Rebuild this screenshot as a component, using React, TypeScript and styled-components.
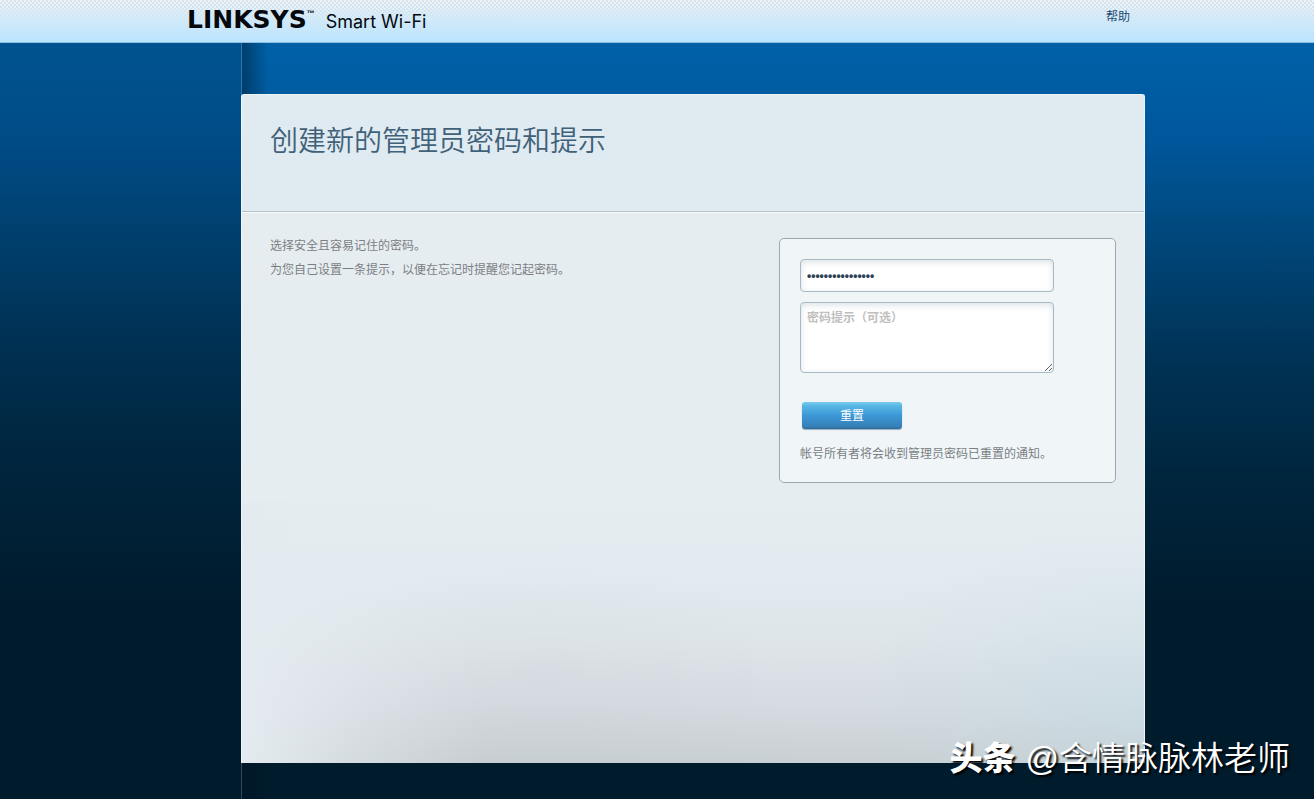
import React, { useState } from "react";
import styled, { createGlobalStyle } from "styled-components";

const GlobalStyle = createGlobalStyle`
  *, *::before, *::after { box-sizing: border-box; }
  body {
    margin: 0;
    font-family: "Liberation Sans", "Noto Sans CJK SC", sans-serif;
    font-size: 12px;
    line-height: 24px;
    color: #7b7f84;
    background: #001b2c;
  }
`;

const Page = styled.div`
  position: relative;
  display: flex;
  flex-direction: column;
  min-height: 100vh;
  overflow: hidden;
`;

const TopBar = styled.header`
  border-bottom: 1px solid #8fbfdc;
  background:
    linear-gradient(180deg, rgba(226, 238, 246, 0.4), #d0e9f9 50%, #bae4ff),
    repeating-conic-gradient(#d3d8dc 0 25%, #f8fafb 0 50%) 0 0 / 4px 4px;
`;

const Container = styled.div`
  width: 100%;
  max-width: 976px;
  margin: 0 auto;
`;

const TopBarRow = styled(Container)`
  display: flex;
  align-items: flex-start;
  justify-content: space-between;
  height: 42px;
  padding: 4px 15px 0 18px;
`;

const Brand = styled.a`
  display: flex;
  align-items: flex-start;
  color: #05080c;
  text-decoration: none;
`;

const BrandName = styled.span`
  font: 700 25px/32px "DejaVu Sans", sans-serif;
`;

const TradeMark = styled.span`
  margin-right: 11px;
  font: 700 8px/20px "Liberation Sans", sans-serif;
`;

const BrandProduct = styled.span`
  font: 400 18px/36px Inter, sans-serif;
`;

const HelpLink = styled.a`
  line-height: 26px;
  color: #1c4a74;
  text-decoration: none;
`;

const Main = styled.main`
  --rail: calc(50% - 416px);
  flex: 1;
  display: flex;
  padding: 51px 0 36px;
  background:
    linear-gradient(180deg, rgba(0, 27, 44, 0.2), rgba(0, 27, 44, 0.1)) 0 0 / var(--rail) 100% no-repeat,
    linear-gradient(90deg, transparent var(--rail), rgba(120, 165, 195, 0.35) var(--rail), rgba(120, 165, 195, 0.35) calc(var(--rail) + 1px), transparent calc(var(--rail) + 1px)),
    linear-gradient(90deg, transparent calc(var(--rail) + 1px), rgba(0, 20, 35, 0.45) calc(var(--rail) + 1px), transparent calc(var(--rail) + 27px)),
    linear-gradient(180deg, #0061a8 0, #00579b 13%, #004577 27%, #003153 43%, #00253d 58%, #001b2c 75%);
`;

const MainRow = styled(Container)`
  display: flex;
  padding-left: 72px;
`;

const Card = styled.section`
  flex: 1;
  display: flex;
  flex-direction: column;
  border: 1px solid #eef5f9;
  border-bottom: 0;
  border-radius: 3px 3px 0 0;
  overflow: hidden;
  background:
    radial-gradient(ellipse 300px 190px at 100% 92%, rgba(192, 220, 230, 0.4), transparent),
    radial-gradient(ellipse 30% 240px at 34% 102%, rgba(192, 199, 203, 0.2), transparent),
    linear-gradient(90deg, #e4ebf0, rgba(228, 235, 240, 0.5) 12%, rgba(228, 235, 240, 0) 27%) 0 100% / 100% 260px no-repeat,
    linear-gradient(180deg, #e6edf0 60%, #e3eaf0 72%, #dfe6ea 81%, #d6dce2 91%, #c9d0d3);
`;

const CardHeader = styled.div`
  padding: 29px 28px 51px;
  border-bottom: 1px solid #b9c0c5;
  box-shadow: 0 1px 0 #f8fbfc;
  background: #dfeaf1;
`;

const Title = styled.h1`
  margin: 0;
  font-size: 28px;
  line-height: 36px;
  font-weight: 350;
  color: #3f6179;
`;

const CardBody = styled.div`
  display: flex;
  align-items: flex-start;
  justify-content: space-between;
  gap: 24px;
  padding: 22px 28px;
`;

const Intro = styled.p`
  margin: 0;
`;

const ResetForm = styled.form`
  display: flex;
  flex-direction: column;
  align-items: flex-start;
  flex: 0 0 337px;
  margin-top: 4px;
  padding: 20px 20px 16px;
  border: 1px solid #9aa9b1;
  border-radius: 5px;
  background: #f0f5f8;
`;

const fieldStyle = `
  display: block;
  width: 254px;
  margin: 0 0 10px;
  padding: 3px 6px;
  border: 1px solid #a9bac4;
  border-radius: 4px;
  background: #fff;
  box-shadow: inset 0 2px 6px rgba(110, 140, 160, 0.25);
  color: #2c4156;
  font: 700 12px/24px "Liberation Sans", "Noto Sans CJK SC", sans-serif;
  outline: none;
  &::placeholder { color: #bfbfbf; opacity: 1; }
`;

const PasswordInput = styled.input`
  ${fieldStyle}
  height: 33px;
`;

const HintInput = styled.textarea`
  ${fieldStyle}
  height: 71px;
  margin-bottom: 29px;
  resize: both;
`;

const SubmitButton = styled.button`
  width: 100px;
  height: 27px;
  margin: 0 2px 13px;
  padding: 0;
  border: 0;
  border-radius: 3px;
  background: linear-gradient(180deg, #79cdf0 0, #58b6e4 15%, #3c98d6 50%, #3580b9 90%, #2f6796);
  box-shadow: 0 1px 1px rgba(30, 70, 105, 0.4);
  color: #fff;
  font: 400 12px/24px "Liberation Sans", "Noto Sans CJK SC", sans-serif;
`;

const Note = styled.p`
  margin: 0;
`;

const Watermark = styled.div`
  position: absolute;
  right: 24px;
  bottom: 16px;
  display: flex;
  gap: 10px;
  color: #fff;
  font: 350 33px/48px "Liberation Sans", "Noto Sans CJK SC", sans-serif;
  text-shadow: 2px 2px 2px #000;
  pointer-events: none;
`;

const WatermarkSite = styled.span`
  font-weight: 900;
`;

export default function App() {
  const [password, setPassword] = useState("administrator123");
  const [hint, setHint] = useState("");

  return (
    <Page>
      <GlobalStyle />
      <TopBar>
        <TopBarRow>
          <Brand href="#">
            <BrandName>LINKSYS</BrandName>
            <TradeMark>™</TradeMark>
            <BrandProduct>Smart Wi-Fi</BrandProduct>
          </Brand>
          <HelpLink href="#help">帮助</HelpLink>
        </TopBarRow>
      </TopBar>
      <Main>
        <MainRow>
          <Card>
            <CardHeader>
              <Title>创建新的管理员密码和提示</Title>
            </CardHeader>
            <CardBody>
              <Intro>
                选择安全且容易记住的密码。
                <br />
                为您自己设置一条提示，以便在忘记时提醒您记起密码。
              </Intro>
              <ResetForm onSubmit={(event) => event.preventDefault()}>
                <PasswordInput
                  type="password"
                  aria-label="密码"
                  value={password}
                  onChange={(event) => setPassword(event.target.value)}
                />
                <HintInput
                  aria-label="密码提示"
                  placeholder="密码提示（可选）"
                  value={hint}
                  onChange={(event) => setHint(event.target.value)}
                />
                <SubmitButton type="submit">重置</SubmitButton>
                <Note>帐号所有者将会收到管理员密码已重置的通知。</Note>
              </ResetForm>
            </CardBody>
          </Card>
        </MainRow>
      </Main>
      <Watermark>
        <WatermarkSite>头条</WatermarkSite>
        <span>@含情脉脉林老师</span>
      </Watermark>
    </Page>
  );
}
